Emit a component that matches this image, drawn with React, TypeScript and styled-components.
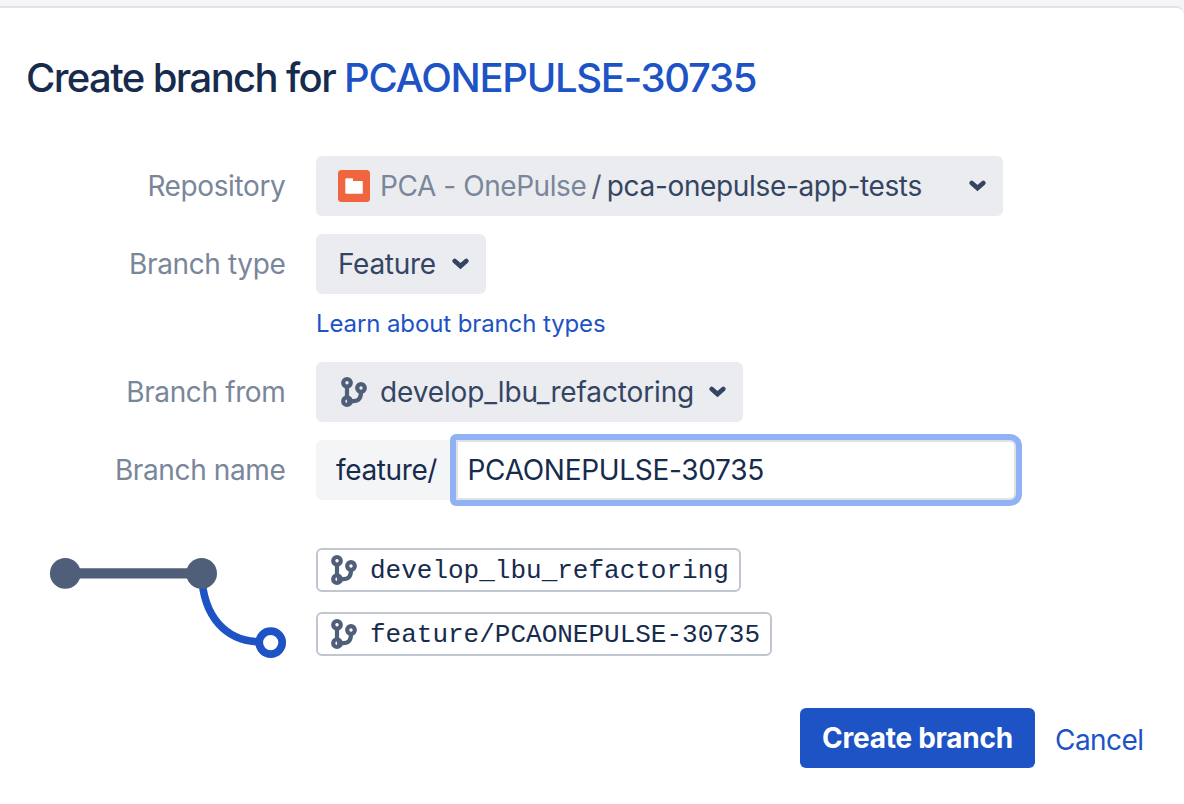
import React from 'react';
import styled, { createGlobalStyle } from 'styled-components';

const GlobalStyle = createGlobalStyle`
  *, *::before, *::after { box-sizing: border-box; }
  body {
    margin: 0;
    background: #f4f5f7;
    color: #172b4d;
    font-family: Inter, "Liberation Sans", sans-serif;
    font-size: 28px;
  }
`;

const Page = styled.main`
  height: 804px;
  padding-top: 6px;
  overflow: hidden;
`;

const Card = styled.section`
  height: 798px;
  padding-left: 26px;
  background: #fff;
  border-top: 2px solid #e1e3e9;
  border-top-right-radius: 8px;
`;

const Title = styled.h1`
  margin: 0;
  padding-top: 46px;
  height: 148px;
  font-size: 40px;
  font-weight: 550;
  line-height: 48px;
  white-space: nowrap;
  letter-spacing: -1.61px;
`;

const IssueLink = styled.a`
  color: #1d53c5;
  text-decoration: none;
  letter-spacing: -1.3px;
`;

const Text = styled.span<{ $spacing?: number }>`
  white-space: nowrap;
  letter-spacing: ${(p) => p.$spacing ?? -0.38}px;
`;

const Form = styled.form`
  display: flex;
  flex-direction: column;
  gap: 18px;
`;

const Row = styled.div`
  display: grid;
  grid-template-columns: 260px 1fr;
  column-gap: 30px;
`;

const Label = styled.label`
  height: 60px;
  padding-right: 0.6px;
  line-height: 60px;
  text-align: right;
  color: #7a869a;
`;

const Field = styled.div`
  display: flex;
  flex-direction: column;
  align-items: flex-start;
`;

const Select = styled.button<{ $width: number }>`
  display: flex;
  align-items: center;
  width: ${(p) => p.$width}px;
  height: 60px;
  padding: 0 17.3px 0 22px;
  border: 0;
  border-radius: 6px;
  background: #ebecf0;
  color: #344563;
  font: inherit;

  > :last-child { margin-left: auto; }
`;

const Project = styled(Text)`
  margin-left: 10px;
  color: #7a869a;
`;

const Separator = styled.span`
  width: 20.5px;
  text-align: center;
  color: #505f79;
`;

const BranchValue = styled(Text)`
  margin-left: 10px;
`;

const HelpLink = styled.a`
  height: 50px;
  line-height: 60px;
  font-size: 24px;
  letter-spacing: -0.11px;
  color: #1d53c5;
  white-space: nowrap;
`;

const NameField = styled.div`
  display: flex;
  height: 60px;
`;

const Prefix = styled.span`
  width: 140px;
  padding-left: 20px;
  line-height: 60px;
  border-radius: 6px 0 0 6px;
  background: #f4f5f7;
`;

const FocusRing = styled.div`
  width: 572px;
  height: 72px;
  margin: -6px 0 0 -6px;
  padding: 6px;
  border-radius: 6px 12px 12px 6px;
  background: #91b1f5;
`;

const NameInput = styled.div`
  width: 560px;
  height: 60px;
  padding-left: 9.5px;
  line-height: 56px;
  border: 2px solid #dfe1e6;
  border-radius: 0 6px 6px 0;
  background: #fff;
`;

const Preview = styled.div`
  display: flex;
  padding-top: 48px;
`;

const Chips = styled.div`
  display: flex;
  flex-direction: column;
  gap: 20px;
`;

const Chip = styled.div<{ $width: number }>`
  display: flex;
  align-items: center;
  width: ${(p) => p.$width}px;
  height: 44px;
  padding-left: 10px;
  border: 2px solid #c1c7d0;
  border-radius: 6px;
`;

const Code = styled.code`
  margin-left: 10px;
  padding-top: 2px;
  font-family: "Liberation Mono", monospace;
  font-size: 26px;
  line-height: 38px;
  white-space: nowrap;
`;

const Actions = styled.footer`
  display: flex;
  padding: 44px 0 0 774px;
`;

const PrimaryButton = styled.button`
  width: 235px;
  height: 60px;
  padding: 0;
  border: 0;
  border-radius: 6px;
  background: #1d53c5;
  color: #fff;
  font: inherit;
  font-weight: 650;
  letter-spacing: -0.25px;
`;

const CancelLink = styled.a`
  margin-left: 20px;
  line-height: 64px;
  letter-spacing: -0.55px;
  color: #1d53c5;
`;

const BranchIcon = () => (
  <svg width="32" height="32" viewBox="0 0 32 32" fill="none" stroke="#505f79" strokeWidth="4.2">
    <path d="M9 10v12M23 16c0 6-2 9.2-8 9.2H9" />
    <circle cx="9" cy="6.8" r="3.8" />
    <circle cx="23" cy="12" r="3.8" />
    <circle cx="9" cy="25.2" r="3.8" />
  </svg>
);

const Chevron = () => (
  <svg width="17" height="12" viewBox="0 0 17 12" fill="none" stroke="#344563" strokeWidth="4.6" strokeLinecap="round">
    <path d="M2.7 3 8.5 8.1 14.3 3" />
  </svg>
);

const RepoIcon = () => (
  <svg width="32" height="32" viewBox="0 0 32 32">
    <rect width="32" height="32" rx="3.5" fill="#f0643f" />
    <path d="M7.3 8.9q0-.7.7-.7h6.3q.7 0 .7.7V11h9q.8 0 .8.8v11.1q0 .8-.8.8H8.1q-.8 0-.8-.8z" fill="#fff" />
  </svg>
);

const BranchGraph = () => (
  <svg width="290" height="116" viewBox="26 548 290 116" fill="none">
    <path d="M201.7 574C203 618 227 641.5 260 641.8" stroke="#1d53c5" strokeWidth="7.6" />
    <path d="M65.3 573.4h136" stroke="#505f79" strokeWidth="10.4" />
    <circle cx="65.3" cy="573.4" r="15.4" fill="#505f79" />
    <circle cx="201.6" cy="573.4" r="15.4" fill="#505f79" />
    <circle cx="270.7" cy="642.6" r="11.5" fill="#fff" stroke="#1d53c5" strokeWidth="7.7" />
  </svg>
);

export default function App() {
  return (
    <Page>
      <GlobalStyle />
      <Card>
        <Title>
          Create branch for <IssueLink>PCAONEPULSE-30735</IssueLink>
        </Title>
        <Form>
          <Row>
            <Label><Text>Repository</Text></Label>
            <Field>
              <Select type="button" $width={687}>
                <RepoIcon />
                <Project $spacing={-0.43}>PCA - OnePulse</Project>
                <Separator>/</Separator>
                <Text $spacing={-0.35}>pca-onepulse-app-tests</Text>
                <Chevron />
              </Select>
            </Field>
          </Row>
          <Row>
            <Label><Text>Branch type</Text></Label>
            <Field>
              <Select type="button" $width={170}>
                <Text $spacing={-0.3}>Feature</Text>
                <Chevron />
              </Select>
              <HelpLink>Learn about branch types</HelpLink>
            </Field>
          </Row>
          <Row>
            <Label><Text>Branch from</Text></Label>
            <Field>
              <Select type="button" $width={427}>
                <BranchIcon />
                <BranchValue $spacing={-0.14}>develop_lbu_refactoring</BranchValue>
                <Chevron />
              </Select>
            </Field>
          </Row>
          <Row>
            <Label><Text>Branch name</Text></Label>
            <NameField>
              <Prefix><Text>feature/</Text></Prefix>
              <FocusRing>
                <NameInput><Text $spacing={-0.3}>PCAONEPULSE-30735</Text></NameInput>
              </FocusRing>
            </NameField>
          </Row>
        </Form>
        <Preview>
          <BranchGraph />
          <Chips>
            <Chip $width={425}><BranchIcon /><Code>develop_lbu_refactoring</Code></Chip>
            <Chip $width={456}><BranchIcon /><Code>feature/PCAONEPULSE-30735</Code></Chip>
          </Chips>
        </Preview>
        <Actions>
          <PrimaryButton type="button">Create branch</PrimaryButton>
          <CancelLink>Cancel</CancelLink>
        </Actions>
      </Card>
    </Page>
  );
}
